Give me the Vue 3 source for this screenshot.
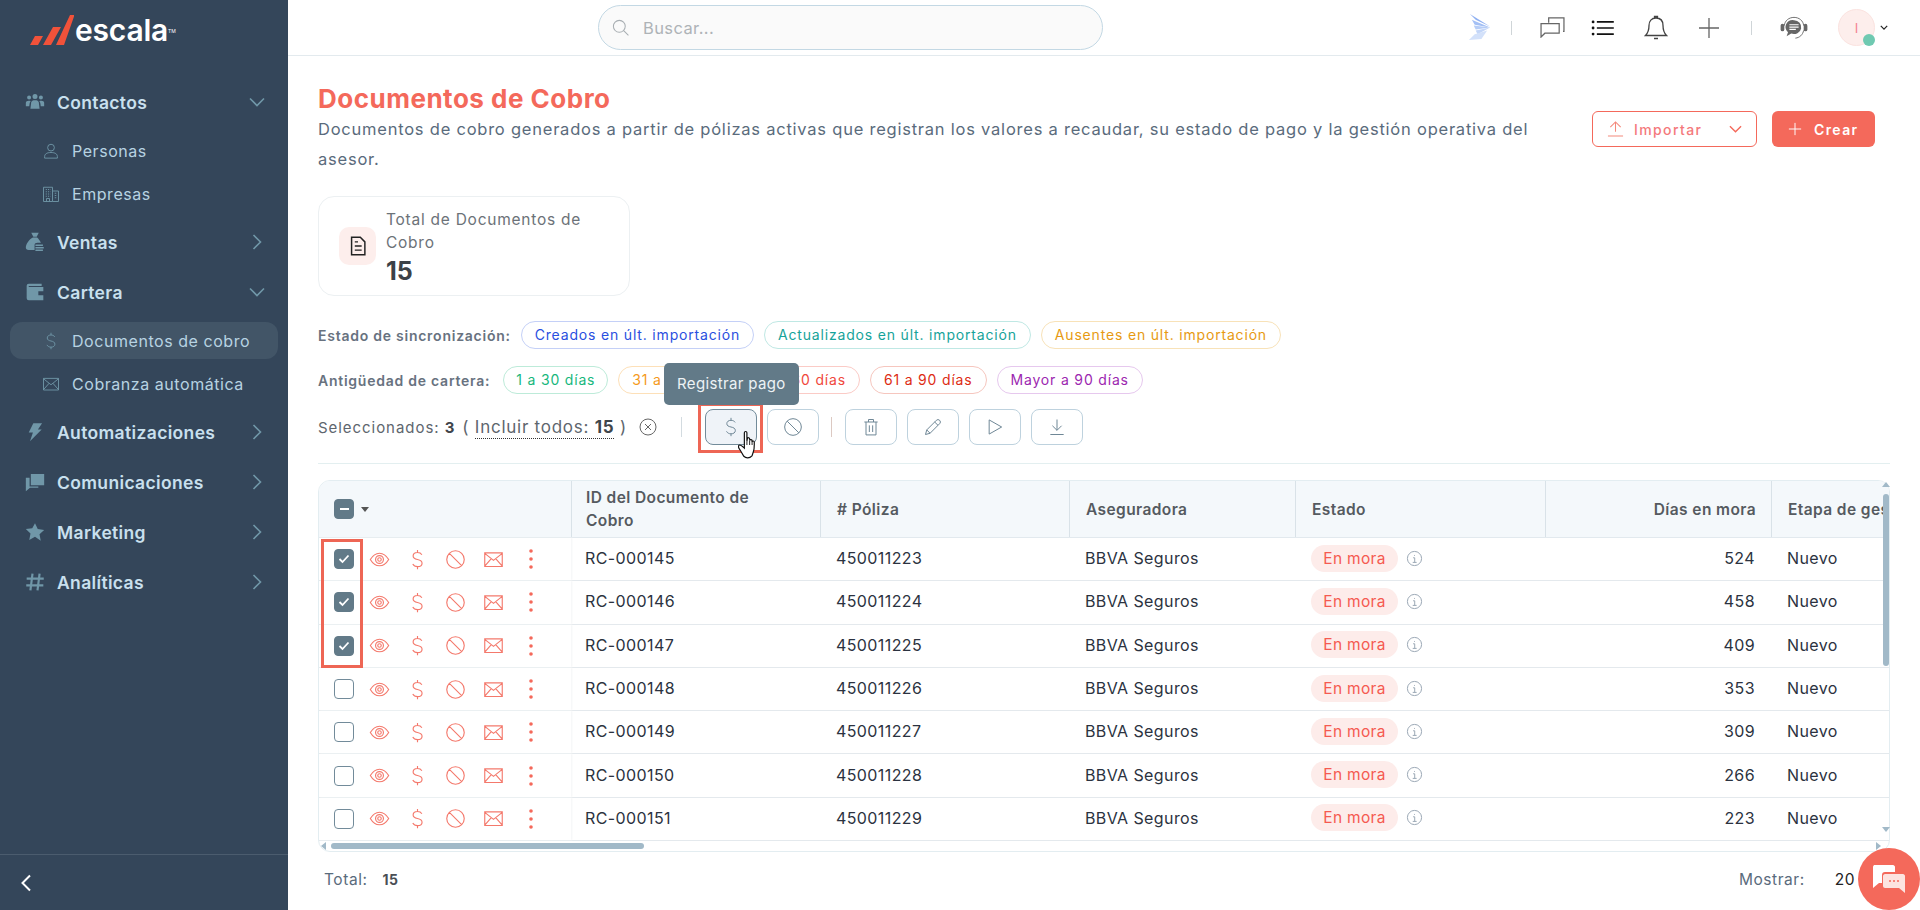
<script setup>
import { ref } from 'vue'

const icons = {
  contacts: 'M9 5.500a3 3 0 1 0 6 0a3 3 0 1 0-6 0z M2.500 6.500a2.400 2.400 0 1 0 4.800 0a2.400 2.400 0 1 0-4.800 0z M16.700 6.500a2.400 2.400 0 1 0 4.800 0a2.400 2.400 0 1 0-4.800 0z M7.500 12c.8-1.500 2.500-2 4.500-2s3.700.5 4.500 2l1 8H6.500z M1 17v-4c0-1.500 1.500-2.500 3.500-2.500 1 0 1.800.2 2.300.6-.8.8-1.200 1.900-1.300 3l-.4 2.900z M23 17v-4c0-1.500-1.500-2.500-3.500-2.500-1 0-1.800.2-2.300.6.8.8 1.200 1.900 1.300 3l.4 2.900z',
  bag: 'M7.500 1h9l-2.500 4.800h-4z M9.500 6.500h5c1.800 1.500 3.500 4 4.600 6.500h-4.100c-2 0-3.500.8-3.500 2.500v6h-7c-2.500 0-3.500-1.200-3.500-3 0-4 4-10 8.500-12z M12.500 15h9v1.800h-9z M12.500 18h10v1.800h-10z M12.500 21h9v1.800h-9z',
  wallet: 'M2 4.500A2.500 2.500 0 0 1 4.500 2H20v2.800H4.500v1.200H22v16H4.500A2.500 2.500 0 0 1 2 19.500z M16 11v5h6v-5z',
  bolt: 'M10 1.500h10.500l-5 7.500h4.500L6 23l3.500-10.500H4.500z',
  chats: 'M7 2.500h16v13.500H10l-3 0z M1 7h4.500v10.500H16v1.500H6l-5 4z',
  star: 'M12 1.500l3.300 7 7.700 1-5.600 5.300 1.500 7.700L12 17.800 5.100 21.500l1.500-7.700L1 8.500l7.700-1z',
  hash: 'M9 2L6.500 22 M17.500 2L15 22 M2 8h20.500 M1.500 16h20.500'
}

const nav = [
  { label: 'Contactos', icon: 'contacts', open: true, children: [
    { label: 'Personas', icon: 'person' },
    { label: 'Empresas', icon: 'building' }
  ] },
  { label: 'Ventas', icon: 'bag' },
  { label: 'Cartera', icon: 'wallet', open: true, children: [
    { label: 'Documentos de cobro', icon: 'dollar', active: true },
    { label: 'Cobranza automática', icon: 'mail' }
  ] },
  { label: 'Automatizaciones', icon: 'bolt' },
  { label: 'Comunicaciones', icon: 'chats' },
  { label: 'Marketing', icon: 'star' },
  { label: 'Analíticas', icon: 'hash', stroke: true }
]

const outline = {
  person: 'M12 3a4.500 4.500 0 1 0 0 9a4.500 4.500 0 1 0 0-9z M3.500 21.500v-2c0-3.500 3-5.500 8.500-5.500s8.500 2 8.500 5.500v2z',
  building: 'M2 22V3h12v19z M14 8h8v14h-8 M5 6h1.500M8 6h1.500M11 6h.5M5 9h1.500M8 9h1.500M11 9h.5M5 12h1.500M8 12h1.500M11 12h.5M5 15h1.500M8 15h1.500M11 15h.5M6 22v-4h4v4M17 11h2M17 14h2M17 17h2',
  dollar: 'M17 6.500C16 4.800 14.200 4 12 4 9 4 7 5.500 7 8s2 3.400 5 4 5.200 1.600 5.200 4.200S15 20.200 12 20.200c-2.400 0-4.300-1-5.400-3 M12 1v3 M12 20v3',
  mail: 'M2 4.500h20v15.500H2z M2 5l10 8 10-8 M2 19.500l7.500-8.500 M22 19.500L14.500 11',
  eye: 'M1.500 12C4.500 7 8 4.800 12 4.800S19.500 7 22.500 12c-3 5-6.500 7.200-10.500 7.200S4.500 17 1.500 12z M12 7.500a4.500 4.500 0 1 0 0 9a4.500 4.500 0 1 0 0-9z M12 10a2 2 0 1 0 0 4a2 2 0 1 0 0-4z',
  ban: 'M12 2a10 10 0 1 0 0 20a10 10 0 1 0 0-20z M5 5l14 14',
  trash: 'M4 6h16 M9 6V3h6v3 M6 6v15.500h12V6 M10 10v8 M14 10v8',
  pencil: 'M3 21l1.500-5.500L16 4a2.500 2.500 0 0 1 4 4L8.500 19.500z M14 6l4 4 M4.500 15.500l4 4',
  play: 'M5 3.500l15 8.500-15 8.500z',
  download: 'M12 3v13 M6.500 10.500L12 16l5.500-5.500 M4 21h16',
  info: 'M12 2a10 10 0 1 0 0 20a10 10 0 1 0 0-20z M12 7v1.200 M10 11h2.300v6.500 M9.500 17.500h5.500'
}

const rowActions = ['eye', 'dollar', 'ban', 'mail']
const toolbarButtons = ['dollar', 'ban', 'sep', 'trash', 'pencil', 'play', 'download']

const rows = ref([
  { id: 'RC-000145', poliza: '450011223', dias: 524, checked: true },
  { id: 'RC-000146', poliza: '450011224', dias: 458, checked: true },
  { id: 'RC-000147', poliza: '450011225', dias: 409, checked: true },
  { id: 'RC-000148', poliza: '450011226', dias: 353, checked: false },
  { id: 'RC-000149', poliza: '450011227', dias: 309, checked: false },
  { id: 'RC-000150', poliza: '450011228', dias: 266, checked: false },
  { id: 'RC-000151', poliza: '450011229', dias: 223, checked: false }
])

const syncFilters = [
  { label: 'Creados en últ. importación', tone: 'blue' },
  { label: 'Actualizados en últ. importación', tone: 'teal' },
  { label: 'Ausentes en últ. importación', tone: 'amber' }
]
const ageFilters = [
  { label: '1 a 30 días', tone: 'green' },
  { label: '31 a 45 días', tone: 'orange' },
  { label: '46 a 60 días', tone: 'coral' },
  { label: '61 a 90 días', tone: 'red' },
  { label: 'Mayor a 90 días', tone: 'purple' }
]
</script>

<template>
  <div class="app">
    <aside class="sidebar">
      <div class="logo">
        <svg class="logo-mark" viewBox="0 0 44 30">
          <path d="M0 30l5-9h8l-5 9z M13 30L23 12h8L21 30z M26 30L40 0h4.500L34 30z" fill="#f1523a" />
        </svg>
        <span class="logo-text">escala</span><span class="logo-tm">TM</span>
      </div>
      <nav class="nav">
        <div v-for="item in nav" :key="item.label">
          <div class="nav-item">
            <svg class="nav-icon" :class="{ 'nav-icon-line': item.stroke }" viewBox="0 0 24 24"><path :d="icons[item.icon]" fill-rule="evenodd" /></svg>
            <span>{{ item.label }}</span>
            <svg class="nav-chevron" viewBox="0 0 16 16">
              <path :d="item.open ? 'M1 4.500l7 7 7-7' : 'M4.500 1l7 7-7 7'" />
            </svg>
          </div>
          <div v-if="item.children" class="nav-sub">
            <div v-for="child in item.children" :key="child.label" class="nav-child">
              <div class="nav-child-inner" :class="{ active: child.active }">
                <svg class="nav-child-icon" viewBox="0 0 24 24"><path :d="outline[child.icon]" /></svg>
                <span>{{ child.label }}</span>
              </div>
            </div>
          </div>
        </div>
      </nav>
      <div class="collapse">
        <svg viewBox="0 0 12 18"><path d="M10 1.500L2.500 9l7.500 7.500" /></svg>
      </div>
    </aside>

    <div class="main">
      <header class="topbar">
        <label class="search">
          <svg viewBox="0 0 24 24"><path d="M10.500 3a7.500 7.500 0 1 0 0 15a7.500 7.500 0 1 0 0-15z M16 16l6 6" /></svg>
          <input type="text" placeholder="Buscar..." />
        </label>
        <div class="top-icons">
          <svg class="wing" viewBox="0 0 24 28">
            <path d="M2 0l21 13L8 6z" fill="#8fb0f2" />
            <path d="M4 6l19 8L7 11z" fill="#a4c0f5" />
            <path d="M6 12l17 2-15 2z" fill="#b6cdf7" />
            <path d="M8 17l15-3-13 7z" fill="#c3d6f8" />
            <path d="M7 21l13-4-6 9-13 1z" fill="#d3e1fa" />
          </svg>
          <span class="top-sep"></span>
          <svg class="top-icon chat" viewBox="0 0 26 22"><path d="M9 6V1h16v14h-1 M1 7h19v10H5l-4 4z" /></svg>
          <svg class="top-icon list" viewBox="0 0 24 17"><path d="M6 2h18M6 8.500h18M6 15h18" /><circle cx="2" cy="2" r="1.500" /><circle cx="2" cy="8.500" r="1.500" /><circle cx="2" cy="15" r="1.500" /></svg>
          <svg class="top-icon bell" viewBox="0 0 24 26"><path d="M12 3c-4.500 0-7 3-7 7.500 0 5-1.500 8-3.500 10h21c-2-2-3.500-5-3.500-10C19 6 16.500 3 12 3z M10.500 3V1.500h3V3 M10 23.500h4" /></svg>
          <svg class="top-icon plus" viewBox="0 0 20 20"><path d="M10 0v20M0 10h20" /></svg>
          <span class="top-sep"></span>
          <svg class="top-icon support" viewBox="0 0 30 26">
            <path class="support-bubble" d="M15 4.500a8 7.500 0 1 1-3 14.500l-5 3 1.500-4.500A8 7.500 0 0 1 15 4.500z" />
            <path class="support-frame" d="M4.500 10.500C5 5 9.500 1.500 15 1.500S25 5 25.500 10.500 M25.500 15.500c-1 5-4.500 8-9 8.500" />
            <rect x="0.500" y="8.500" width="4" height="8" rx="2" class="support-pad" />
            <rect x="25.500" y="8.500" width="4" height="8" rx="2" class="support-pad" />
            <path class="support-lines" d="M10 9.500h10M10 12h10M10 14.500h7" />
          </svg>
          <div class="avatar"><span>I</span><i></i></div>
          <svg class="avatar-caret" viewBox="0 0 10 6"><path d="M1 1l4 4 4-4" /></svg>
        </div>
      </header>

      <main class="content">
        <div class="page-head">
          <div class="page-title">
            <h1>Documentos de Cobro</h1>
            <p>Documentos de cobro generados a partir de pólizas activas que registran los valores a recaudar, su estado de pago y la gestión operativa del asesor.</p>
          </div>
          <div class="page-actions">
            <button class="btn-outline">
              <svg viewBox="0 0 18 18"><path d="M9 12V1.500M3.500 7L9 1.500 14.500 7M1 16.500h16" /></svg>
              <span>Importar</span>
              <svg class="btn-caret" viewBox="0 0 14 8"><path d="M1 1l6 6 6-6" /></svg>
            </button>
            <button class="btn-solid">
              <svg viewBox="0 0 16 16"><path d="M8 1v14M1 8h14" /></svg>
              <span>Crear</span>
            </button>
          </div>
        </div>

        <div class="stat-card">
          <div class="stat-icon">
            <svg viewBox="0 0 24 24"><path d="M5 2.500h9.500L19.500 7.500V21.500H5z M8.500 7.500h3.500M8.500 12h7.500M8.500 16.500h7.500" /></svg>
          </div>
          <div>
            <div class="stat-label">Total de Documentos de Cobro</div>
            <div class="stat-value">15</div>
          </div>
        </div>

        <div class="filter-row">
          <span class="filter-label">Estado de sincronización:</span>
          <span v-for="f in syncFilters" :key="f.label" class="pill" :class="'pill-' + f.tone">{{ f.label }}</span>
        </div>
        <div class="filter-row filter-row-age">
          <span class="filter-label">Antigüedad de cartera:</span>
          <span v-for="f in ageFilters" :key="f.label" class="pill" :class="'pill-' + f.tone">{{ f.label }}</span>
        </div>

        <div class="selection">
          <span>Seleccionados: <b>3</b></span>
          <span class="include">( <span class="include-link">Incluir todos: <b>15</b></span> )</span>
          <svg class="clear" viewBox="0 0 18 18"><circle cx="9" cy="9" r="8" /><path d="M6 6l6 6M12 6l-6 6" /></svg>
          <span class="tool-sep"></span>
          <template v-for="(b, i) in toolbarButtons" :key="i">
            <span v-if="b === 'sep'" class="tool-sep tool-sep-mid"></span>
            <button v-else class="tool-btn" :class="{ hover: i === 0 }">
              <svg viewBox="0 0 24 24"><path :d="outline[b]" /></svg>
              <template v-if="i === 0">
                <span class="mark-box"></span>
                <span class="tooltip">Registrar pago</span>
                <svg class="hand" viewBox="0 0 22 32">
                  <path d="M7 2.500c0-1.800 2.800-1.800 2.800 0V12l.5-3c.2-1.500 2.500-1.300 2.500.3l.2 1.700c.3-1.400 2.500-1.200 2.500.4v1c.4-1.200 2.400-1 2.400.5 0 4 .3 7-1 10.500l-1.500 4.500c-3 3.200-7 2.500-9 .5L2 21c-1.500-2-2.500-3.500-.8-4.800 1.200-.7 2.800.5 5.800 3.300z" fill="#fff" stroke="#111" stroke-width="1.300" />
                  <path d="M9.800 12v4M12.800 11v5M15.500 12v4" stroke="#111" stroke-width="1" fill="none" />
                </svg>
              </template>
            </button>
          </template>
        </div>

        <div class="table-wrap">
          <div class="table">
            <div class="tr th-row">
              <div class="th th-check">
                <span class="check check-on"><i class="dash"></i></span>
                <span class="th-caret"></span>
              </div>
              <div class="th th-id">ID del Documento de Cobro</div>
              <div class="th"># Póliza</div>
              <div class="th">Aseguradora</div>
              <div class="th">Estado</div>
              <div class="th th-right">Días en mora</div>
              <div class="th">Etapa de gestión</div>
            </div>
            <div v-for="row in rows" :key="row.id" class="tr">
              <div class="td td-actions">
                <span class="check" :class="{ 'check-on': row.checked }">
                  <svg v-if="row.checked" viewBox="0 0 12 10"><path d="M1.500 5l3 3 6-6.500" /></svg>
                </span>
                <svg v-for="a in rowActions" :key="a" class="row-icon" viewBox="0 0 24 24"><path :d="outline[a]" /></svg>
                <svg class="row-dots" viewBox="0 0 6 22"><circle cx="3" cy="3" r="1.800" /><circle cx="3" cy="11" r="1.800" /><circle cx="3" cy="19" r="1.800" /></svg>
              </div>
              <div class="td">{{ row.id }}</div>
              <div class="td">{{ row.poliza }}</div>
              <div class="td">BBVA Seguros</div>
              <div class="td">
                <span class="status">En mora</span>
                <svg class="info" viewBox="0 0 24 24"><path :d="outline.info" /></svg>
              </div>
              <div class="td td-right">{{ row.dias }}</div>
              <div class="td">Nuevo</div>
            </div>
            <span class="mark-rows"></span>
          </div>
          <div class="scroll-v">
            <i class="arrow arrow-up"></i>
            <span class="scroll-v-thumb"></span>
            <i class="arrow arrow-down"></i>
          </div>
          <div class="scroll-h">
            <i class="arrow arrow-left"></i>
            <span class="scroll-h-thumb"></span>
            <i class="arrow arrow-right"></i>
          </div>
        </div>

        <div class="table-foot">
          <span class="total">Total: <b>15</b></span>
          <span class="show">Mostrar: <em>20</em></span>
        </div>
      </main>
    </div>

    <button class="chat-fab">
      <svg viewBox="0 0 34 30">
        <path d="M2 1h19c1 0 2 1 2 2v5H13c-2 0-3 1-3 3v8H7l-6 5V3c0-1 1-2 1-2z" fill="#fff" />
        <path d="M13 10h18c1 0 2 1 2 2v17l-6-5H13c-1 0-2-1-2-2V12c0-1 1-2 2-2z" fill="#fde4e0" />
        <circle cx="18" cy="17" r="1" fill="#f4695b" /><circle cx="22" cy="17" r="1" fill="#f4695b" /><circle cx="26" cy="17" r="1" fill="#f4695b" />
      </svg>
    </button>
  </div>
</template>

<style scoped>
.app {
  display: flex;
  height: 910px;
  overflow: hidden;
  font-family: Inter, 'Liberation Sans', sans-serif;
  color: #2b3240;
  position: relative;
}

/* sidebar */
.sidebar {
  width: 288px;
  flex: none;
  background: #34465a;
  display: flex;
  flex-direction: column;
}
.logo {
  height: 77px;
  padding: 0 0 18px 30px;
  box-sizing: border-box;
  display: flex;
  align-items: center;
}
.logo-mark {
  width: 44px;
  height: 30px;
  margin-right: 1px;
}
.logo-text {
  color: #fff;
  font-size: 30px;
  font-weight: 600;
  letter-spacing: -0.2px;
  line-height: 30px;
}
.logo-tm {
  color: #fff;
  font-size: 5px;
  align-self: flex-start;
  margin-top: 28px;
}
.nav {
  flex: 1;
}
.nav-item {
  height: 50px;
  display: flex;
  align-items: center;
  padding-left: 25px;
  color: #c9e0ee;
  font-size: 17.5px;
  font-weight: 600;
  letter-spacing: 0.35px;
}
.nav-icon {
  width: 20px;
  height: 20px;
  margin-right: 12px;
  fill: #7097a8;
}
.nav-icon-line {
  fill: none;
  stroke: #7097a8;
  stroke-width: 2.6;
}
.nav-chevron {
  width: 16px;
  height: 16px;
  margin-left: auto;
  margin-right: 23px;
  fill: none;
  stroke: #7097a8;
  stroke-width: 1.6;
}
.nav-sub {
  padding: 2px 0;
}
.nav-child {
  height: 43px;
  padding: 3px 10px;
  box-sizing: border-box;
}
.nav-child-inner {
  height: 37px;
  display: flex;
  align-items: center;
  padding-left: 32px;
  border-radius: 12px;
  color: #b7d3e2;
  font-size: 16px;
  letter-spacing: 0.55px;
}
.nav-child-inner.active {
  background: #425567;
}
.nav-child-icon {
  width: 18px;
  height: 18px;
  margin-right: 12px;
  fill: none;
  stroke: #7097a8;
  stroke-width: 1.2;
}
.collapse {
  height: 55px;
  border-top: 1px solid #4b5c6e;
  display: flex;
  align-items: center;
  padding-left: 20px;
}
.collapse svg {
  width: 12px;
  height: 18px;
  fill: none;
  stroke: #fff;
  stroke-width: 2;
}

/* topbar */
.main {
  flex: 1;
  min-width: 0;
  display: flex;
  flex-direction: column;
}
.topbar {
  height: 56px;
  flex: none;
  box-sizing: border-box;
  border-bottom: 1px solid #e3eaee;
  display: flex;
  align-items: center;
  padding-left: 310px;
}
.search {
  width: 505px;
  height: 45px;
  box-sizing: border-box;
  border: 1px solid #c3d8e4;
  border-radius: 23px;
  background: #fafafa;
  display: flex;
  align-items: center;
  padding: 0 12px;
}
.search svg {
  width: 19px;
  height: 19px;
  fill: none;
  stroke: #a8aeb2;
  stroke-width: 1.3;
  margin-right: 11px;
}
.search input {
  border: 0;
  outline: 0;
  background: transparent;
  flex: 1;
  font: 16.5px Inter, sans-serif;
  letter-spacing: 0.4px;
}
.search input::placeholder {
  color: #aeb3b7;
}
.top-icons {
  margin-left: auto;
  display: flex;
  align-items: center;
  padding-right: 32px;
}
.wing {
  width: 23px;
  height: 27px;
}
.top-sep {
  width: 1px;
  height: 14px;
  background: #cfd5d8;
  margin: 0 28px 0 20px;
}
.top-icon {
  fill: none;
  stroke: #666;
  stroke-width: 1.3;
}
.chat {
  width: 25px;
  height: 21px;
  margin-right: 26px;
}
.list {
  width: 23px;
  height: 16px;
  margin-right: 30px;
  stroke: #111;
  stroke-width: 1.8;
}
.list circle {
  fill: #111;
  stroke: none;
}
.bell {
  width: 24px;
  height: 26px;
  margin-right: 31px;
  stroke: #444;
}
.plus {
  width: 20px;
  height: 20px;
  margin-right: 12px;
}
.support {
  width: 28px;
  height: 24px;
  margin-right: 30px;
}
.support-bubble,
.support-pad {
  fill: #666;
  stroke: none;
}
.support-frame {
  stroke: #666;
  stroke-width: 1;
}
.support-lines {
  stroke: #fff;
  stroke-width: 1.2;
}
.avatar {
  width: 37px;
  height: 37px;
  border-radius: 50%;
  background: #fdeeec;
  border: 1px solid #fbe3e0;
  box-sizing: border-box;
  display: flex;
  align-items: center;
  justify-content: center;
  position: relative;
  color: #f4828f;
  font-size: 13px;
}
.avatar i {
  position: absolute;
  right: -1px;
  bottom: -1px;
  width: 12px;
  height: 12px;
  border-radius: 50%;
  background: #6fc9b1;
}
.avatar-caret {
  width: 8px;
  height: 5px;
  margin-left: 5px;
  fill: none;
  stroke: #222;
  stroke-width: 1.5;
}

/* content */
.content {
  flex: 1;
  min-height: 0;
  padding: 30px 30px 0;
}
.page-head {
  display: flex;
  align-items: flex-start;
  justify-content: space-between;
  padding-right: 15px;
}
.page-title {
  width: 1240px;
}
h1 {
  margin: 0;
  color: #f4695b;
  font-size: 26px;
  line-height: 26px;
  font-weight: 700;
  letter-spacing: 0.5px;
}
.page-title p {
  margin: 2px 0 0;
  color: #5a6b7c;
  font-size: 16.5px;
  line-height: 30px;
  letter-spacing: 0.77px;
}
.page-actions {
  display: flex;
  gap: 15px;
  margin-top: 25px;
}
.btn-outline,
.btn-solid {
  height: 36px;
  box-sizing: border-box;
  border-radius: 6px;
  display: flex;
  align-items: center;
  font: 500 14px Inter, sans-serif;
  letter-spacing: 1.4px;
}
.btn-outline {
  width: 165px;
  background: #fff;
  border: 1px solid #f4695b;
  color: #f4797c;
  padding: 0 14px;
}
.btn-outline svg {
  width: 17px;
  height: 18px;
  margin-right: 10px;
  fill: none;
  stroke: #f4897c;
  stroke-width: 1.1;
}
.btn-outline .btn-caret {
  width: 13px;
  height: 8px;
  margin: 0 0 0 auto;
  stroke: #f4695b;
  stroke-width: 1.5;
}
.btn-solid {
  width: 103px;
  background: #f4695b;
  border: 0;
  color: #fff;
  padding: 0 16px;
  font-weight: 600;
}
.btn-solid svg {
  width: 14px;
  height: 14px;
  margin-right: 12px;
  fill: none;
  stroke: #fff;
  stroke-width: 1.1;
}
.stat-card {
  width: 312px;
  height: 100px;
  box-sizing: border-box;
  margin-top: 22px;
  border: 1px solid #ecf0f2;
  border-radius: 16px;
  display: flex;
  align-items: center;
  padding: 0 12px 0 20px;
  gap: 10px;
}
.stat-icon {
  width: 37px;
  height: 38px;
  flex: none;
  border-radius: 10px;
  background: #fdeeec;
  display: flex;
  align-items: center;
  justify-content: center;
}
.stat-icon svg {
  width: 22px;
  height: 22px;
  fill: none;
  stroke: #222;
  stroke-width: 1.6;
}
.stat-label {
  width: 215px;
  color: #6c7278;
  font-size: 15.5px;
  line-height: 23px;
  letter-spacing: 0.75px;
}
.stat-value {
  margin-top: 3px;
  font-size: 25px;
  line-height: 28px;
  font-weight: 700;
  color: #3c4147;
}
.filter-row {
  display: flex;
  align-items: center;
  gap: 10px;
  margin-top: 25px;
  height: 28px;
}
.filter-row-age {
  margin-top: 17px;
}
.filter-label {
  color: #68727f;
  font-size: 14px;
  font-weight: 600;
  letter-spacing: 0.75px;
}
.filter-row-age .filter-label {
  margin-right: 3px;
}
.pill {
  height: 28px;
  box-sizing: border-box;
  padding: 0 13px;
  border-radius: 14px;
  border: 1px solid;
  background: #fff;
  font-size: 14px;
  line-height: 25px;
  letter-spacing: 0.82px;
}
.pill-blue { color: #2a4fe0; border-color: #c4d0f7; }
.pill-teal { color: #16a39a; border-color: #bfe8e4; }
.pill-amber { color: #e79a12; border-color: #f8e2b8; }
.pill-green { color: #17b77d; border-color: #bdebd9; padding: 0 12px; }
.pill-orange { color: #f59a1c; border-color: #fde0b8; padding-right: 8px; }
.pill-coral { color: #f0483c; border-color: #fbcbc6; }
.pill-red { color: #dd2c14; border-color: #f6c6be; }
.pill-purple { color: #9c27b0; border-color: #e6c8ee; }

.selection {
  display: flex;
  align-items: center;
  height: 36px;
  margin-top: 15px;
  color: #5e666e;
  font-size: 15px;
  letter-spacing: 0.95px;
}
.selection b {
  color: #3f454b;
  font-weight: 700;
}
.include {
  margin-left: 7px;
  font-size: 17px;
  letter-spacing: 0.75px;
}
.include-link {
  border-bottom: 1px dotted #333;
  padding-bottom: 1px;
}
.clear {
  width: 18px;
  height: 18px;
  margin-left: 12px;
  fill: none;
  stroke: #666;
  stroke-width: 1;
}
.tool-sep {
  width: 1px;
  height: 20px;
  background: #d3dbe0;
  margin: 0 23px 0 24px;
}
.tool-sep-mid {
  margin: 0 13px 0 12px;
  background: #dcc9c2;
}
.tool-btn {
  width: 52px;
  height: 36px;
  padding: 0;
  margin-right: 10px;
  box-sizing: border-box;
  border: 1px solid #bed2de;
  border-radius: 8px;
  background: #fff;
  display: flex;
  align-items: center;
  justify-content: center;
  position: relative;
}
.tool-btn > svg:first-child {
  width: 20px;
  height: 20px;
  fill: none;
  stroke: #6f8796;
  stroke-width: 1.2;
}
.tool-btn.hover {
  background: #eff3f8;
  border-color: #728b9a;
}
.tool-btn:nth-of-type(2) {
  margin-right: 0;
}
.mark-box {
  position: absolute;
  left: -8px;
  top: -7px;
  width: 65px;
  height: 50px;
  box-sizing: border-box;
  border: 3px solid #ee6655;
}
.tooltip {
  position: absolute;
  left: -42px;
  top: -47px;
  width: 135px;
  height: 42px;
  background: #627a88;
  border-radius: 5px;
  color: #edf2f5;
  font-size: 15px;
  line-height: 42px;
  text-align: center;
  letter-spacing: 0.35px;
  font-family: Inter, sans-serif;
}
.hand {
  position: absolute;
  left: 32px;
  top: 20px;
  width: 20px;
  height: 30px;
}

/* table */
.table-wrap {
  margin-top: 18px;
  padding-top: 16px;
  border-top: 1px solid #e3eff0;
  position: relative;
}
.table {
  width: 1572px;
  height: 372px;
  box-sizing: border-box;
  border: 1px solid #e3edf1;
  border-radius: 12px;
  overflow: hidden;
  position: relative;
}
.tr {
  display: grid;
  grid-template-columns: 252px 249px 249px 226px 250px 226px 300px;
  width: 1852px;
  height: 43.3px;
  box-sizing: border-box;
  border-bottom: 1px solid #e4e9ed;
}
.th-row {
  height: 57px;
  background: #f4f8fb;
  border-bottom: 1px solid #e2e9ee;
}
.th {
  display: flex;
  align-items: center;
  padding: 0 15px 0 16px;
  color: #555a60;
  font-size: 15.5px;
  font-weight: 600;
  line-height: 23px;
  letter-spacing: 0.4px;
  box-sizing: border-box;
  border-left: 1px solid #d9e2e8;
}
.th-check {
  border-left: 0;
  padding-left: 15px;
}
.th-id {
  padding-left: 14px;
  padding-right: 40px;
}
.th-right {
  justify-content: flex-end;
}
.th-caret {
  width: 0;
  height: 0;
  margin-left: 7px;
  border: 4.5px solid transparent;
  border-top: 5px solid #555;
  border-bottom: 0;
}
.td {
  display: flex;
  align-items: center;
  padding: 0 15px 2px 16px;
  font-size: 16px;
  letter-spacing: 0.4px;
  color: #2b3240;
  box-sizing: border-box;
}
.td:nth-child(2) {
  padding-left: 14px;
}
.td-right {
  justify-content: flex-end;
  padding-right: 16px;
}
.td-actions {
  padding: 0 0 0 15px;
  box-shadow: 1px 0 2px #f3f5f6;
}
.check {
  width: 20px;
  height: 20px;
  flex: none;
  box-sizing: border-box;
  border: 1px solid #728b9a;
  border-radius: 4px;
  background: #fff;
  display: flex;
  align-items: center;
  justify-content: center;
}
.check-on {
  background: #627a88;
  border-color: #627a88;
}
.check svg {
  width: 12px;
  height: 10px;
  fill: none;
  stroke: #fff;
  stroke-width: 1.8;
}
.dash {
  width: 9px;
  height: 2px;
  background: #fff;
}
.row-icon {
  width: 21px;
  height: 21px;
  margin-left: 17px;
  fill: none;
  stroke: #f4796c;
  stroke-width: 1.3;
}
.row-icon:first-of-type {
  margin-left: 15px;
}
.row-dots {
  width: 6px;
  height: 22px;
  margin-left: 24px;
  fill: #f4695b;
}
.status {
  height: 27px;
  width: 87px;
  border-radius: 14px;
  background: #fdecea;
  color: #f55a50;
  font-size: 15.5px;
  line-height: 27px;
  text-align: center;
  letter-spacing: 0.3px;
}
.info {
  width: 17px;
  height: 17px;
  margin-left: 8px;
  fill: none;
  stroke: #9aa7b4;
  stroke-width: 1.4;
}
.mark-rows {
  position: absolute;
  left: 2px;
  top: 58px;
  width: 42px;
  height: 129px;
  box-sizing: border-box;
  border: 3px solid #ee6655;
}
.scroll-v {
  position: absolute;
  right: 0;
  top: 17px;
  bottom: 12px;
  width: 9px;
}
.scroll-v-thumb {
  position: absolute;
  left: 2px;
  top: 13px;
  width: 6px;
  height: 172px;
  border-radius: 3px;
  background: #a1b9c8;
}
.scroll-h {
  position: absolute;
  left: 1px;
  right: 8px;
  bottom: 1px;
  height: 11px;
}
.scroll-h-thumb {
  position: absolute;
  left: 12px;
  top: 3px;
  width: 313px;
  height: 6px;
  border-radius: 3px;
  background: #a1b9c8;
}
.arrow {
  position: absolute;
  width: 0;
  height: 0;
  border: 4px solid transparent;
}
.arrow-up { left: 1px; top: 1px; border-top: 0; border-bottom: 5px solid #a1b9c8; }
.arrow-down { left: 1px; bottom: 8px; border-bottom: 0; border-top: 5px solid #a1b9c8; }
.arrow-left { left: 2px; top: 2px; border-left: 0; border-right: 5px solid #a1b9c8; }
.arrow-right { right: 1px; top: 2px; border-right: 0; border-left: 5px solid #a1b9c8; }

.table-foot {
  display: flex;
  justify-content: space-between;
  height: 54px;
  align-items: center;
  padding: 0 35px 0 6px;
  color: #5a6b7c;
  font-size: 15.5px;
  letter-spacing: 0.55px;
}
.total b {
  margin-left: 10px;
  color: #4a4f55;
  font-weight: 700;
  font-size: 14px;
}
.show em {
  font-style: normal;
  color: #222;
  margin-left: 25px;
}
.chat-fab {
  position: absolute;
  right: 0;
  bottom: 0;
  width: 62px;
  height: 62px;
  border: 0;
  border-radius: 50%;
  background: #f4695b;
  padding: 0;
  display: flex;
  align-items: center;
  justify-content: center;
}
.chat-fab svg {
  width: 34px;
  height: 30px;
}
</style>

<style>
html, body {
  margin: 0;
  overflow: hidden;
  background: #fff;
}
</style>
